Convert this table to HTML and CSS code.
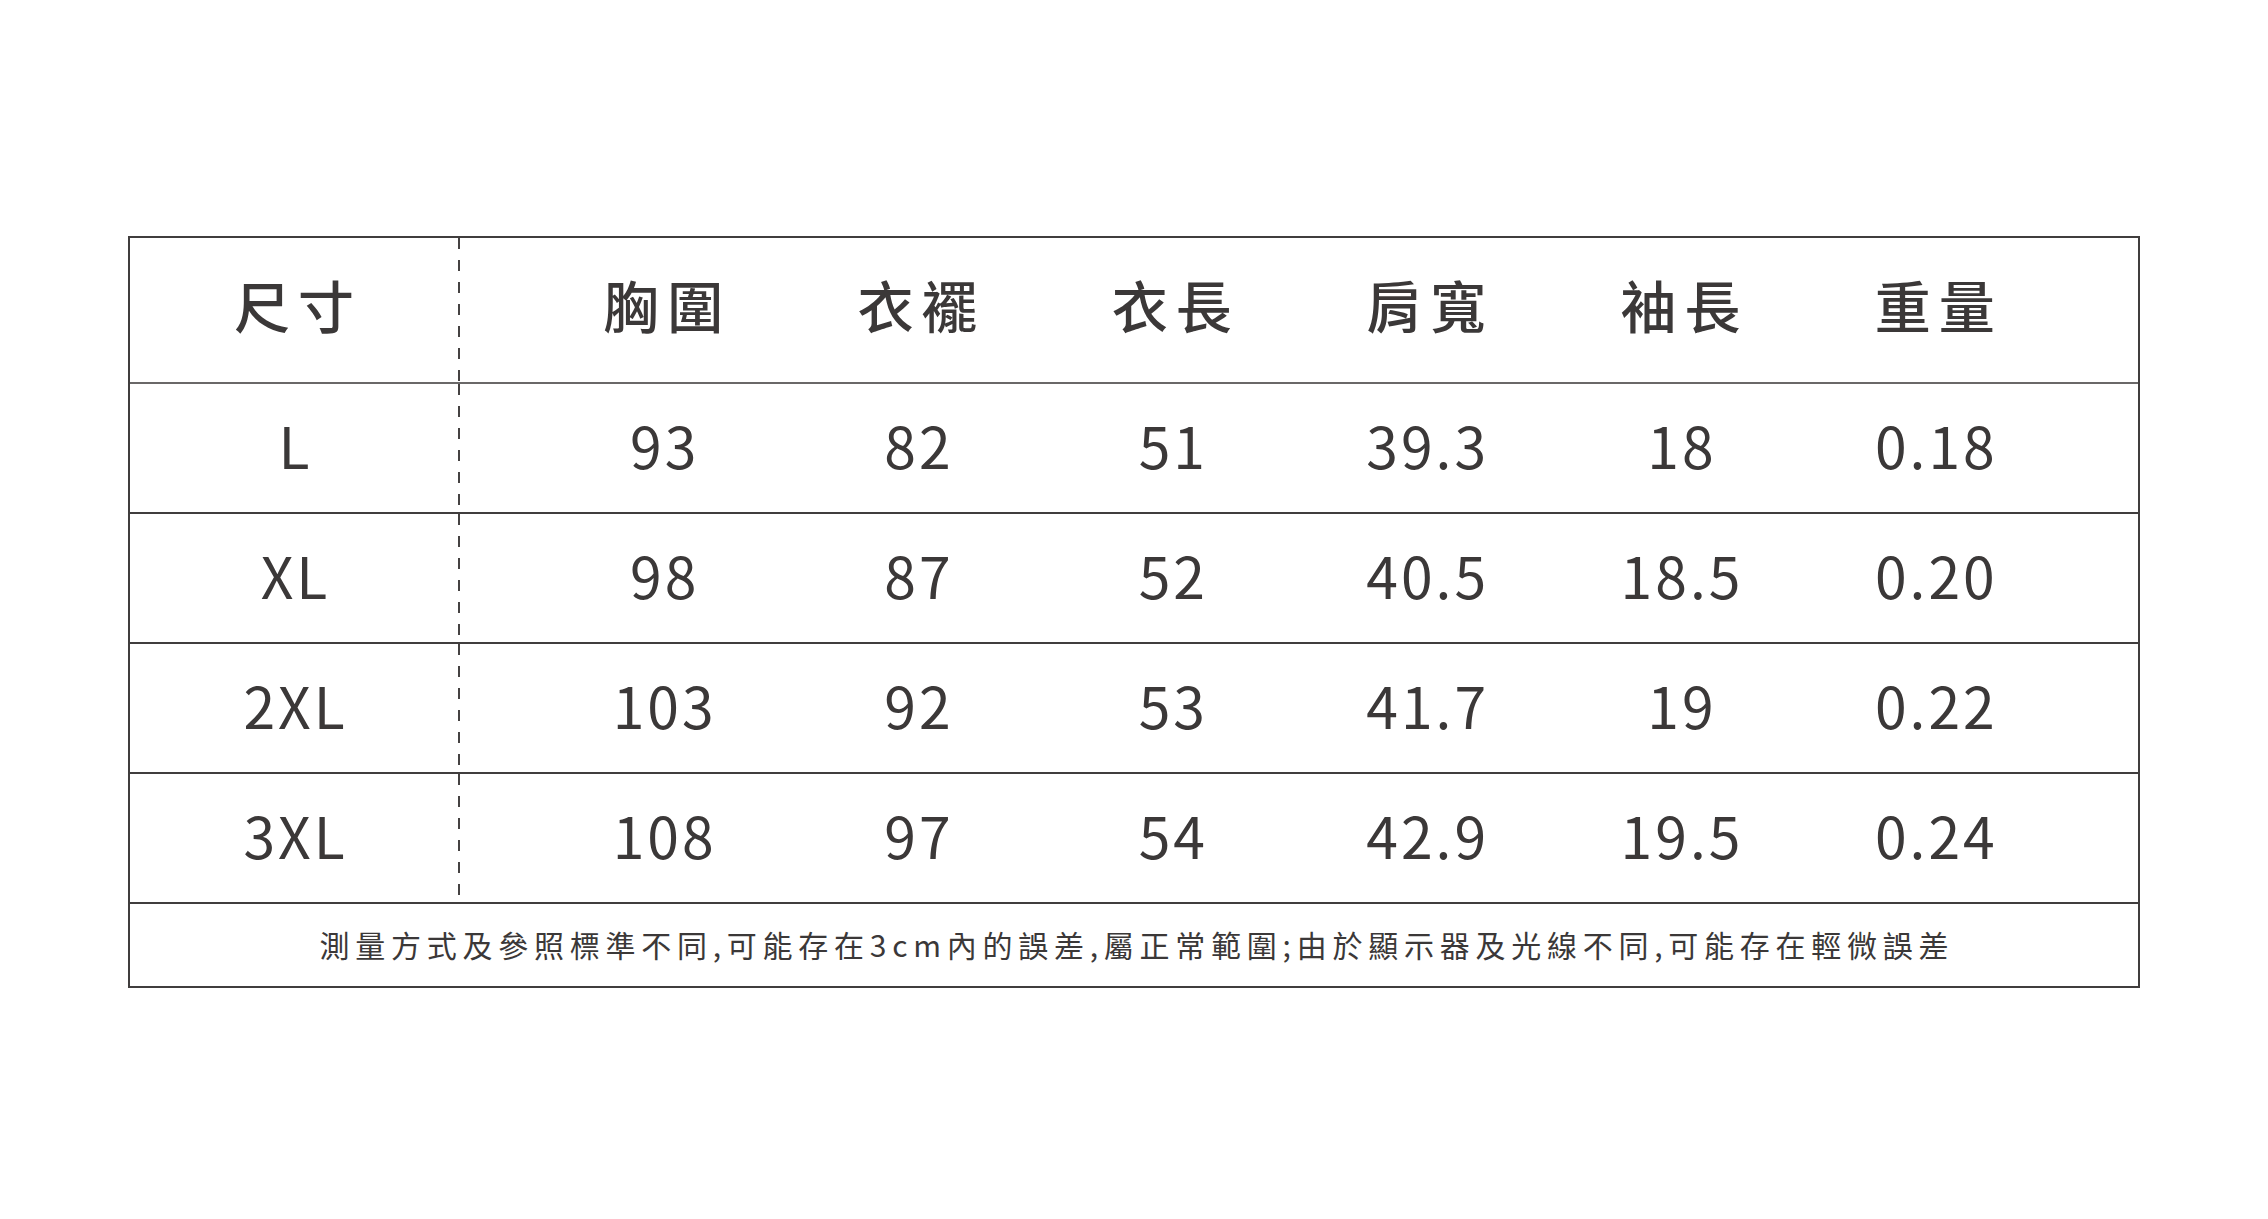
FILE: index.html
```html
<!DOCTYPE html>
<html lang="zh-Hant">
<head>
<meta charset="utf-8">
<title>尺寸表</title>
<link rel="stylesheet" href="styles.css">
</head>
<body>
<main class="page">
  <section class="sheet">
    <div class="row head">
      <div class="size"><span class="t">尺寸</span></div>
      <div class="vals">
        <span class="t">胸圍</span><span class="t">衣襬</span><span class="t">衣長</span><span class="t">肩寬</span><span class="t">袖長</span><span class="t">重量</span>
      </div>
    </div>
    <div class="row">
      <div class="size"><span class="n">L</span></div>
      <div class="vals"><span class="n">93</span><span class="n">82</span><span class="n">51</span><span class="n">39.3</span><span class="n">18</span><span class="n">0.18</span></div>
    </div>
    <div class="row">
      <div class="size"><span class="n">XL</span></div>
      <div class="vals"><span class="n">98</span><span class="n">87</span><span class="n">52</span><span class="n">40.5</span><span class="n">18.5</span><span class="n">0.20</span></div>
    </div>
    <div class="row">
      <div class="size"><span class="n">2XL</span></div>
      <div class="vals"><span class="n">103</span><span class="n">92</span><span class="n">53</span><span class="n">41.7</span><span class="n">19</span><span class="n">0.22</span></div>
    </div>
    <div class="row">
      <div class="size"><span class="n">3XL</span></div>
      <div class="vals"><span class="n">108</span><span class="n">97</span><span class="n">54</span><span class="n">42.9</span><span class="n">19.5</span><span class="n">0.24</span></div>
    </div>
    <div class="note"><span class="nt">測量方式及參照標準不同,可能存在3cm內的誤差,屬正常範圍;由於顯示器及光線不同,可能存在輕微誤差</span></div>
  </section>
</main>
</body>
</html>
```
FILE: styles.css
```css
html, body {
  margin: 0;
  padding: 0;
  background: #ffffff;
}

body {
  font-family: "Noto Sans CJK TC", "Noto Sans", sans-serif;
  color: #3b3838;
}

.page {
  padding: 236px 0 0 128px;
}

.sheet {
  box-sizing: border-box;
  width: 2012px;
  border: 2px solid #403d3d;
}

.row {
  display: grid;
  grid-template-columns: 330px 1fr;
  height: 130px;
  border-bottom: 2px solid #403d3d;
  box-sizing: border-box;
}

.row.head {
  height: 146px;
  border-bottom-color: #6a6868;
}

.size {
  display: flex;
  align-items: center;
  justify-content: center;
  padding-right: 2px;
  background-image: linear-gradient(to bottom, #454242 50%, transparent 50%);
  background-size: 2px 22px;
  background-repeat: repeat-y;
  background-position: right top;
}

.vals {
  display: grid;
  grid-template-columns: repeat(6, 1fr);
  padding: 0 76px;
  align-items: center;
  justify-items: center;
}

.row .size,
.row .vals {
  padding-bottom: 8px;
}

.row.head .size,
.row.head .vals {
  padding-bottom: 12px;
}

.t {
  font-size: 56px;
  font-weight: 500;
  letter-spacing: 8px;
  margin-right: -8px;
  line-height: 1;
}

.n {
  font-size: 57px;
  letter-spacing: 3px;
  margin-right: -3px;
  line-height: 1;
}

.note {
  height: 82px;
  display: flex;
  align-items: center;
  justify-content: center;
  padding-bottom: 3px;
  box-sizing: border-box;
}

.nt {
  font-size: 30px;
  letter-spacing: 5.75px;
  margin-right: -5.75px;
  line-height: 1;
}
```
